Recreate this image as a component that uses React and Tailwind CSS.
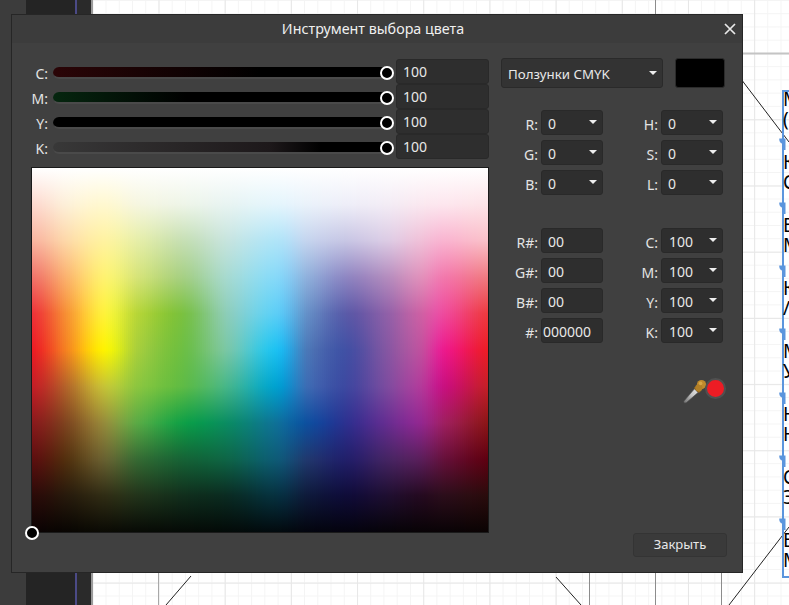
import React from "react";

const FONT = "font-['Noto_Sans','Open_Sans',sans-serif]";

const keyX = [38, 140, 250, 350, 490, 620, 770, 860, 980, 1100, 1200, 1270, 1405];
const keyCols = [
  ["#ffffff","#fdd9cf","#f9b5a0","#f0746a","#ee3338","#ed1c24","#c41e26","#8a1a1c","#5c0f0f","#2a0a08","#0a0303"],
  ["#ffffff","#fdf0d8","#fdd9a8","#fbb46e","#f79334","#f6851f","#b4662a","#7f4620","#53310f","#271a0c","#080502"],
  ["#ffffff","#fff8d0","#fff2a0","#fff170","#fff13a","#fff200","#c6c236","#958a3a","#686030","#2f2c14","#0a0a04"],
  ["#ffffff","#f6f6e0","#e6eea8","#d6e478","#b7d637","#a8cf3b","#8cc63f","#5aaa45","#366a33","#22331a","#070a05"],
  ["#ffffff","#eef5e8","#c6dfb4","#a6d085","#7ac142","#6dbf45","#5ebb46","#0f9f47","#166336","#112e1c","#050a06"],
  ["#ffffff","#e8f4f2","#c6e4de","#a6dad0","#8ccdb9","#78c7a6","#45b68a","#0a8c63","#0e6547","#0a2b22","#030a08"],
  ["#ffffff","#e4f5fc","#b0e4f8","#86d8f8","#5ccdf6","#1cc0f2","#00a0d0","#0e7098","#0e5a76","#06303f","#020a0e"],
  ["#ffffff","#eaf2fa","#c4d4ee","#8fb0dc","#6490c8","#4a78b8","#3c6cb4","#0d4f9f","#20386e","#0e1a3a","#03050e"],
  ["#ffffff","#eeeef8","#c8c6e4","#8f86c2","#5b5aa8","#4250a4","#3f48a0","#2e3090","#221f6a","#0f0c38","#04030e"],
  ["#ffffff","#f3ecf5","#dccbe4","#b48cbe","#9060a8","#8556a2","#7d4b9f","#662d91","#452463","#1e0e30","#060309"],
  ["#ffffff","#fae8f0","#f0c0d8","#e090bb","#cd60a4","#c0509e","#b23a9a","#92278f","#5a1e5a","#240a20","#080306"],
  ["#ffffff","#fde6ee","#f9b4d0","#f278ac","#ee4a9c","#ec1a8c","#c8107f","#9e1f5f","#65103a","#2b0d1a","#090306"],
  ["#ffffff","#fde4e8","#fac0c8","#f07a80","#ee3a3e","#ed1c24","#c51f26","#8c1616","#5f0010","#2a0c0c","#0a0303"],
];

const rgb = (h) => [1, 3, 5].map((i) => parseInt(h.slice(i, i + 2), 16));
const keyRgb = keyCols.map((c) => c.map(rgb));

const cr = (a, b, c, d, t) =>
  0.5 * (2 * b + (c - a) * t + (2 * a - 5 * b + 4 * c - d) * t * t + (3 * b - a - 3 * c + d) * t * t * t);

function colAt(zx) {
  let i = 0;
  while (i < keyX.length - 2 && zx > keyX[i + 1]) i++;
  const t = Math.min(1, Math.max(0, (zx - keyX[i]) / (keyX[i + 1] - keyX[i])));
  const p0 = keyRgb[Math.max(0, i - 1)];
  const p1 = keyRgb[i];
  const p2 = keyRgb[i + 1];
  const p3 = keyRgb[Math.min(keyRgb.length - 1, i + 2)];
  return p1.map((c, r) => {
    const v = c.map((_, k) => Math.round(Math.min(255, Math.max(0, cr(p0[r][k], p1[r][k], p2[r][k], p3[r][k], t)))));
    return `rgb(${v.join(",")})`;
  });
}

function ColorField() {
  const cols = [];
  for (let x = 0; x < 456; x += 2) cols.push({ x, stops: colAt(38 + (x / 456) * 1367) });
  return (
    <svg width="456" height="364" viewBox="0 0 456 364" className="block" shapeRendering="crispEdges">
      <defs>
        {cols.map((c) => (
          <linearGradient key={c.x} id={`c${c.x}`} x1="0" y1="0" x2="0" y2="1">
            {c.stops.map((s, i) => (
              <stop key={i} offset={i / 10} stopColor={s} />
            ))}
          </linearGradient>
        ))}
      </defs>
      {cols.map((c) => (
        <rect key={c.x} x={c.x} y="0" width="2.5" height="364" fill={`url(#c${c.x})`} />
      ))}
    </svg>
  );
}

function Knob({ className }) {
  return <div className={`absolute w-[14px] h-[14px] rounded-full bg-black border-2 border-white ${className}`} />;
}

function Caret({ className }) {
  return <div className={`absolute w-0 h-0 border-l-[4px] border-r-[4px] border-t-[4px] border-l-transparent border-r-transparent border-t-[#eeeeee] ${className}`} />;
}

function Label({ children, className = "" }) {
  return <div className={`text-[14px] leading-none text-[#e4e4e4] text-right ${className}`}>{children}</div>;
}

function Slider({ label, value, track }) {
  return (
    <div className="relative h-[25px] flex items-center">
      <Label className="absolute right-[calc(100%-36px)] top-[8px]">{label}</Label>
      <div className={`absolute left-[41px] top-[8px] w-[334px] h-[12px] rounded-full border-b-2 border-[#4a4a4a] ${track}`} />
      <Knob className="left-[368px] top-[7px]" />
      <div className="absolute left-[384px] top-0 w-[93px] h-[25px] bg-[#2e2e2e] border border-[#292929] rounded-[3px] pl-[6px] text-[14px] leading-[23px] text-[#e8e8e8]">
        {value}
      </div>
    </div>
  );
}

function Field({ label, value, select, pl = "pl-[6px]" }) {
  return (
    <div className="relative h-[30px] flex justify-end">
      <Label className="absolute right-[65px] top-[8px]">{label}</Label>
      <div className={`relative w-[62px] h-[25px] bg-[#2e2e2e] border border-[#292929] rounded-[3px] ${pl} text-[14px] leading-[25px] text-[#e8e8e8]`}>
        {value}
        {select && <Caret className="right-[5px] top-[9px]" />}
      </div>
    </div>
  );
}

function Dropper() {
  return (
    <svg width="26" height="28" viewBox="0 0 26 28" className="absolute left-[681px] top-[377px]">
      <defs>
        <linearGradient id="tip" x1="0" y1="1" x2="1" y2="0">
          <stop offset="0" stopColor="#6f6f6f" />
          <stop offset="0.55" stopColor="#c4c4c4" />
          <stop offset="1" stopColor="#e8e8e8" />
        </linearGradient>
      </defs>
      <path d="M2.8 24.2 L3.2 26 L5.2 25.8 L17 15.5 L13.5 11.8 Z" fill="url(#tip)" stroke="#4e4e4e" strokeWidth="0.6" />
      <path d="M12.8 11 L17.8 16 L19.6 14.6 L14.4 9.4 Z" fill="#8f6520" />
      <circle cx="20.5" cy="7.6" r="4.6" fill="#c08a2c" />
      <circle cx="17.8" cy="10.8" r="3.6" fill="#b27f27" />
      <circle cx="19.6" cy="6.4" r="1.8" fill="#d8a645" />
    </svg>
  );
}

const Rows = ["М(", "КС", "ВМ", "К/", "МУ", "НН", "СЭ", "ВМ"];

function Canvas() {
  return (
    <div className="absolute left-[93px] top-0 right-0 bottom-0 bg-white bg-[linear-gradient(to_right,#e7e7e7_1px,transparent_1px),linear-gradient(to_bottom,#e7e7e7_1px,transparent_1px),linear-gradient(to_right,#f4f4f4_1px,transparent_1px),linear-gradient(to_bottom,#f4f4f4_1px,transparent_1px)] bg-[length:66.2px_66.2px,66.2px_66.2px,13.24px_13.24px,13.24px_13.24px] bg-[position:65.5px_-13px,65.5px_-13px,-0.7px_0px,-0.7px_0px]">
      <div className="absolute left-[-2px] top-0 bottom-0 w-[2px] bg-[#9a9a9a]" />
    </div>
  );
}

function CanvasLines() {
  return (
    <svg width="789" height="605" viewBox="0 0 789 605" className="absolute left-0 top-0">
      <g stroke="#8c8c8c" strokeWidth="1" shapeRendering="crispEdges">
        <line x1="655.5" y1="0" x2="655.5" y2="605" />
        <line x1="589.5" y1="570" x2="589.5" y2="605" />
        <line x1="721.5" y1="570" x2="721.5" y2="605" />
        <line x1="158.5" y1="570" x2="158.5" y2="605" stroke="#a8a8a8" />
      </g>
      <line x1="740" y1="53.5" x2="789" y2="53.5" stroke="#c4c4c4" strokeWidth="2" />
      <g stroke="#222" strokeWidth="1" fill="none">
        <line x1="741" y1="79" x2="789" y2="142" />
        <line x1="191" y1="576" x2="166" y2="605" />
        <line x1="556" y1="577" x2="581" y2="605" />
        <line x1="789" y1="527" x2="729" y2="605" />
      </g>
    </svg>
  );
}

function TextColumn() {
  return (
    <div className="absolute left-[782px] top-[90px] w-[20px] h-[488px] border-2 border-[#5b95dd] font-['Liberation_Serif',serif] text-[19px] leading-[20px] text-black">
      <div className="mt-[-3px] ml-[-1px]">
        {Rows.map((r, i) => (
          <div key={i} className="h-[63px]">
            <div>{r[0]}</div>
            <div>{r[1]}</div>
          </div>
        ))}
      </div>
    </div>
  );
}

function Handles() {
  const ys = [138, 202, 265, 328, 392, 455, 518];
  return (
    <>
      {ys.map((y) => (
        <svg key={y} width="7" height="12" viewBox="0 0 7 12" className="absolute left-[779px]" style={{ top: y }}>
          <path d="M0.3 0.5 H6.5 V12 H3.8 V5.5 C1.8 5.5 0 3.5 0.3 0.5 Z" fill="#5b95dd" />
        </svg>
      ))}
    </>
  );
}

export default function App() {
  return (
    <div className={`relative w-[789px] h-[605px] overflow-hidden bg-[#3c3c3c] ${FONT}`}>
      <div className="absolute left-[26px] top-0 w-[67px] h-full bg-[#242424]" />
      <div className="absolute left-[75px] top-0 w-[2px] h-full bg-[#4b4a86]" />
      <div className="absolute left-[77px] top-0 w-[14px] h-full bg-[#2a2a2a]" />
      <Canvas />
      <CanvasLines />
      <TextColumn />
      <Handles />

      <div className="absolute left-[11px] top-[14px] w-[732px] h-[559px] bg-[#404040] border border-[#262626]" />
      <div className="absolute left-[12px] top-[15px] w-[730px] h-[28px] bg-[#3c3c3c] flex items-center justify-center text-[14.3px] text-[#f0f0f0]">
        <span className="mr-[8px]">Инструмент выбора цвета</span>
      </div>
      <svg width="12" height="12" viewBox="0 0 12 12" className="absolute left-[724px] top-[23px]">
        <path d="M1 1 L11 11 M11 1 L1 11" stroke="#e8e8e8" strokeWidth="1.7" fill="none" />
      </svg>

      <div className="absolute left-[12px] top-[59px] w-[478px]">
        <Slider label="C:" value="100" track="bg-[linear-gradient(to_right,#2b0507,#000000_62%)]" />
        <Slider label="M:" value="100" track="bg-[linear-gradient(to_right,#05260f,#000000_40%)]" />
        <Slider label="Y:" value="100" track="bg-black" />
        <Slider label="K:" value="100" track="bg-[linear-gradient(to_right,#383838,#1d181a_65%,#000000_80%)]" />
      </div>

      <div className="absolute left-[31px] top-[167px] w-[458px] h-[366px] border border-[#1a1a1a]">
        <ColorField />
      </div>
      <Knob className="left-[25px] top-[526px]" />

      <div className="absolute left-[501px] top-[58px] w-[162px] h-[30px] bg-[#333333] border border-[#2a2a2a] rounded-[3px] pl-[6px] text-[13.3px] leading-[30px] text-[#e8e8e8]">
        Ползунки CMYK
        <Caret className="right-[5px] top-[12px]" />
      </div>
      <div className="absolute left-[675px] top-[58px] w-[50px] h-[30px] bg-black border border-[#2b2b2b] rounded-[3px]" />

      <div className="absolute left-[500px] top-[110px] w-[103px]">
        <Field label="R:" value="0" select />
        <Field label="G:" value="0" select />
        <Field label="B:" value="0" select />
      </div>
      <div className="absolute left-[619px] top-[110px] w-[104px]">
        <Field label="H:" value="0" select />
        <Field label="S:" value="0" select />
        <Field label="L:" value="0" select />
      </div>
      <div className="absolute left-[500px] top-[228px] w-[103px]">
        <Field label="R#:" value="00" />
        <Field label="G#:" value="00" />
        <Field label="B#:" value="00" />
        <Field label="#:" value="000000" pl="pl-[1px]" />
      </div>
      <div className="absolute left-[619px] top-[228px] w-[104px]">
        <Field label="C:" value="100" select pl="pl-[7px]" />
        <Field label="M:" value="100" select pl="pl-[7px]" />
        <Field label="Y:" value="100" select pl="pl-[7px]" />
        <Field label="K:" value="100" select pl="pl-[7px]" />
      </div>

      <Dropper />
      <div className="absolute left-[705px] top-[378px] w-[21px] h-[21px] rounded-full bg-[#ed1c24] border-2 border-[#505050]" />

      <div className="absolute left-[633px] top-[533px] w-[94px] h-[24px] bg-[#3a3a3a] border border-[#343434] rounded-[3px] flex items-center justify-center text-[13px] text-[#e8e8e8]">
        Закрыть
      </div>
    </div>
  );
}
